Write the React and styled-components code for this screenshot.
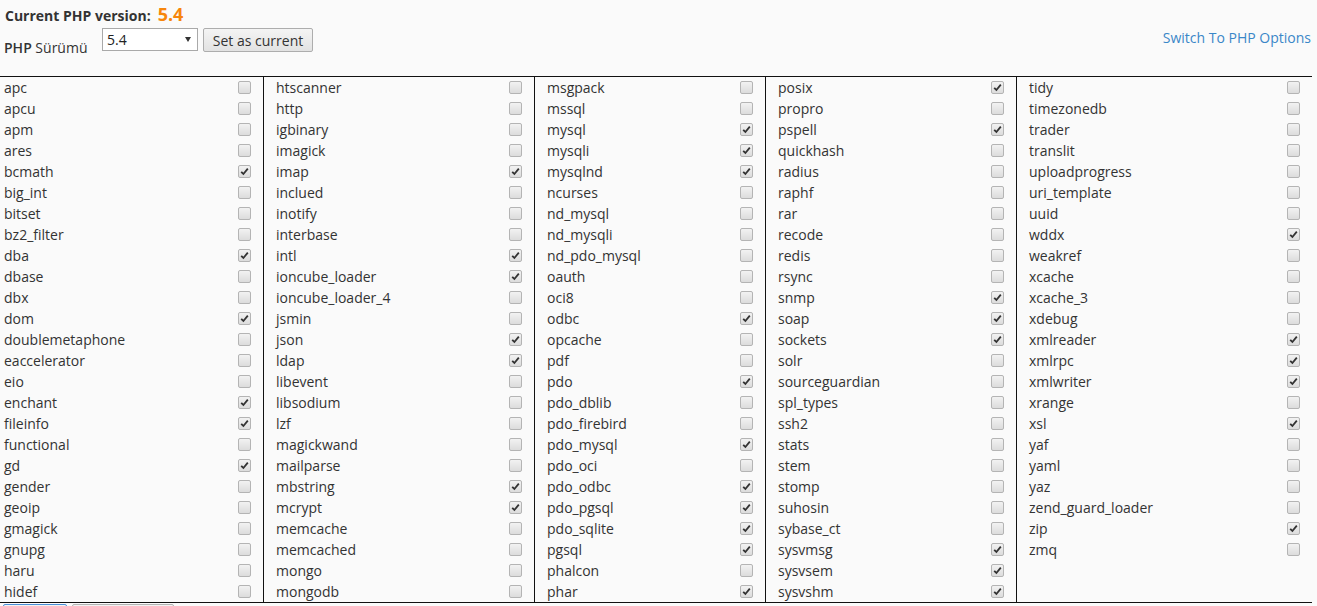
import React from 'react'
import styled, { createGlobalStyle } from 'styled-components'

const GlobalStyle = createGlobalStyle`
  html, body {
    margin: 0;
    padding: 0;
    background: #fafafa;
  }
  body {
    font-family: "Open Sans", "Liberation Sans", sans-serif;
    font-size: 14px;
    color: #333;
    overflow: hidden;
  }
`

const Page = styled.div`
  width: 1317px;
  height: 606px;
  overflow: hidden;
`

const Header = styled.div`
  padding: 2px 5px 0 5px;
  display: flex;
  align-items: baseline;
  gap: 7px;
  font-weight: 700;
  font-size: 14px;
  color: #333;
  height: 22px;
`

const Version = styled.span`
  color: #f7860c;
  font-size: 18px;
  font-weight: 700;
`

const Toolbar = styled.div`
  display: flex;
  align-items: flex-start;
  box-sizing: border-box;
  height: 52px;
  padding: 4px 5px 0 4px;
`

const Label = styled.span`
  width: 98px;
  padding-top: 10px;
  b {
    font-weight: 600;
  }
`

const Select = styled.div`
  position: relative;
  box-sizing: border-box;
  width: 96px;
  height: 23px;
  border: 1px solid #a9a9a9;
  background: #fff;
  padding-left: 4px;
  line-height: 21px;
  font-size: 14px;
  color: #222;
  &::after {
    content: '';
    position: absolute;
    right: 6px;
    top: 8px;
    border-left: 3.5px solid transparent;
    border-right: 3.5px solid transparent;
    border-top: 5px solid #333;
  }
`

const Button = styled.button`
  margin-left: 5px;
  box-sizing: border-box;
  width: 110px;
  height: 24px;
  padding: 0;
  font-family: inherit;
  font-size: 14px;
  color: #333;
  border: 1px solid #adadad;
  border-radius: 2px;
  background: linear-gradient(#f4f4f4, #e2e2e2);
`

const Link = styled.a`
  margin-left: auto;
  color: #3a87c8;
  text-decoration: none;
  font-size: 14px;
  line-height: 19px;
  padding: 0 1px 0 0;
`

const Table = styled.div`
  width: 1312px;
  display: grid;
  grid-template-columns: 263px 271px 231px 251px 296px;
  border-top: 1px solid #111;
  border-bottom: 1px solid #111;
  box-sizing: border-box;
`

const Column = styled.div`
  border-left: ${p => (p.$first ? 'none' : '1px solid #111')};
  padding: ${p => (p.$first ? '0 12px 0 4px' : '0 12px 0 12px')};
  display: flex;
  flex-direction: column;
`

const Row = styled.div`
  height: 21px;
  display: flex;
  align-items: center;
  justify-content: space-between;
  line-height: 21px;
`

const Box = styled.span`
  width: 11px;
  height: 11px;
  border: 1px solid #b4b4b4;
  border-radius: 2px;
  background: linear-gradient(#f2f2f2, #dcdcdc);
  display: flex;
  align-items: center;
  justify-content: center;
`

const Footer = styled.div`
  display: flex;
  gap: 5px;
  padding: 1px 0 0 3px;
`

const FooterButton = styled.div`
  width: ${p => p.$w}px;
  height: 20px;
  border: 1px solid ${p => (p.$active ? '#4a8fd8' : '#b3b3b3')};
  border-radius: 2px;
  background: #f2f2f2;
`

const Check = () => (
  <svg width="9" height="9" viewBox="0 0 9 9">
    <path d="M1.2 4.8 L3.4 7 L7.8 1.6" fill="none" stroke="#333" strokeWidth="1.8" />
  </svg>
)

const columns = [
  ['apc', 'apcu', 'apm', 'ares', 'bcmath*', 'big_int', 'bitset', 'bz2_filter', 'dba*', 'dbase', 'dbx', 'dom*', 'doublemetaphone', 'eaccelerator', 'eio', 'enchant*', 'fileinfo*', 'functional', 'gd*', 'gender', 'geoip', 'gmagick', 'gnupg', 'haru', 'hidef'],
  ['htscanner', 'http', 'igbinary', 'imagick', 'imap*', 'inclued', 'inotify', 'interbase', 'intl*', 'ioncube_loader*', 'ioncube_loader_4', 'jsmin', 'json*', 'ldap*', 'libevent', 'libsodium', 'lzf', 'magickwand', 'mailparse', 'mbstring*', 'mcrypt*', 'memcache', 'memcached', 'mongo', 'mongodb'],
  ['msgpack', 'mssql', 'mysql*', 'mysqli*', 'mysqlnd*', 'ncurses', 'nd_mysql', 'nd_mysqli', 'nd_pdo_mysql', 'oauth', 'oci8', 'odbc*', 'opcache', 'pdf', 'pdo*', 'pdo_dblib', 'pdo_firebird', 'pdo_mysql*', 'pdo_oci', 'pdo_odbc*', 'pdo_pgsql*', 'pdo_sqlite*', 'pgsql*', 'phalcon', 'phar*'],
  ['posix*', 'propro', 'pspell*', 'quickhash', 'radius', 'raphf', 'rar', 'recode', 'redis', 'rsync', 'snmp*', 'soap*', 'sockets*', 'solr', 'sourceguardian', 'spl_types', 'ssh2', 'stats', 'stem', 'stomp', 'suhosin', 'sybase_ct', 'sysvmsg*', 'sysvsem*', 'sysvshm*'],
  ['tidy', 'timezonedb', 'trader', 'translit', 'uploadprogress', 'uri_template', 'uuid', 'wddx*', 'weakref', 'xcache', 'xcache_3', 'xdebug', 'xmlreader*', 'xmlrpc*', 'xmlwriter*', 'xrange', 'xsl*', 'yaf', 'yaml', 'yaz', 'zend_guard_loader', 'zip*', 'zmq'],
]

const App = () => {
  return (
    <Page>
      <GlobalStyle />
      <Header>
        Current PHP version: <Version>5.4</Version>
      </Header>
      <Toolbar>
        <Label><b>PHP</b> Sürümü</Label>
        <Select>5.4</Select>
        <Button>Set as current</Button>
        <Link href="#">Switch To PHP Options</Link>
      </Toolbar>
      <Table>
        {columns.map((col, i) => (
          <Column key={i} $first={i === 0}>
            {col.map(item => {
              const on = item.endsWith('*')
              const name = on ? item.slice(0, -1) : item
              return (
                <Row key={name}>
                  <span>{name}</span>
                  <Box>{on && <Check />}</Box>
                </Row>
              )
            })}
          </Column>
        ))}
      </Table>
      <Footer>
        <FooterButton $w={62} $active />
        <FooterButton $w={100} />
      </Footer>
    </Page>
  )
}

export default App
